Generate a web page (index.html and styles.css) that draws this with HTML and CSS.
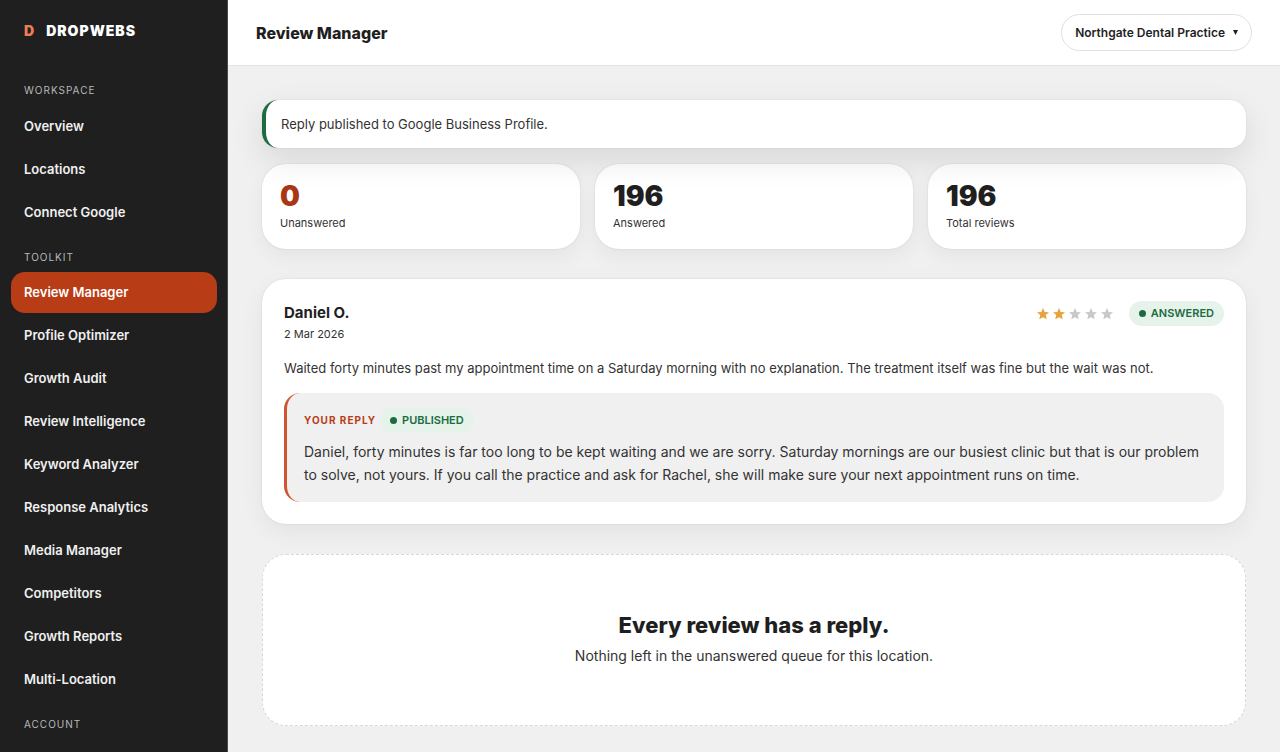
FILE: index.html
```html
<!DOCTYPE html>
<html lang="en">
  <head>
    <meta charset="utf-8">
    <meta name="viewport" content="width=device-width, initial-scale=1">
    <title>Review Manager</title>
    <link rel="stylesheet" href="styles.css">
  </head>
  <body>
    <aside class="sidebar">
      <a class="brand" href="#"><span class="brand-mark">D</span><span>DROPWEBS</span></a>
      <nav class="nav">
        <h2 class="nav-label">Workspace</h2>
        <a href="#">Overview</a>
        <a href="#">Locations</a>
        <a href="#">Connect Google</a>
        <h2 class="nav-label">Toolkit</h2>
        <a class="active" href="#" aria-current="page">Review Manager</a>
        <a href="#">Profile Optimizer</a>
        <a href="#">Growth Audit</a>
        <a href="#">Review Intelligence</a>
        <a href="#">Keyword Analyzer</a>
        <a href="#">Response Analytics</a>
        <a href="#">Media Manager</a>
        <a href="#">Competitors</a>
        <a href="#">Growth Reports</a>
        <a href="#">Multi-Location</a>
        <h2 class="nav-label">Account</h2>
      </nav>
    </aside>

    <div class="page">
      <header class="topbar">
        <h1>Review Manager</h1>
        <button class="location" type="button">Northgate Dental Practice
          <svg width="5" height="5" viewBox="0 0 5 5" aria-hidden="true"><path d="M0 0h5L2.500 5z" fill="currentColor"/></svg>
        </button>
      </header>

      <main class="content">
        <p class="alert" role="status">Reply published to Google Business Profile.</p>

        <section class="stats">
          <div class="stat"><strong class="warn">0</strong><span>Unanswered</span></div>
          <div class="stat"><strong>196</strong><span>Answered</span></div>
          <div class="stat"><strong>196</strong><span>Total reviews</span></div>
        </section>

        <article class="review">
          <div class="review-head">
            <div>
              <h2>Daniel O.</h2>
              <time datetime="2026-03-02">2 Mar 2026</time>
            </div>
            <div class="review-meta">
              <svg class="stars" width="78" height="14" viewBox="0 0 78 14" role="img" aria-label="2 out of 5 stars">
                <defs><path id="star" d="M7 1l1.700 3.900 4.300.4-3.200 2.800.9 4.200L7 10.200l-3.700 2.100.9-4.200L1 5.300l4.300-.4z"/></defs>
                <g fill="#e8a33d"><use href="#star"/><use href="#star" x="16"/></g>
                <g fill="#c9c9c9"><use href="#star" x="32"/><use href="#star" x="48"/><use href="#star" x="64"/></g>
              </svg>
              <span class="badge">Answered</span>
            </div>
          </div>
          <p class="review-text">Waited forty minutes past my appointment time on a Saturday morning with no explanation. The treatment itself was fine but the wait was not.</p>
          <div class="reply">
            <div class="reply-head"><h3>Your reply</h3><span class="badge">Published</span></div>
            <p>Daniel, forty minutes is far too long to be kept waiting and we are sorry. Saturday mornings are our busiest clinic but that is our problem to solve, not yours. If you call the practice and ask for Rachel, she will make sure your next appointment runs on time.</p>
          </div>
        </article>

        <section class="empty">
          <h2>Every review has a reply.</h2>
          <p>Nothing left in the unanswered queue for this location.</p>
        </section>
      </main>
    </div>
  </body>
</html>
```
FILE: styles.css
```css
* {
  box-sizing: border-box;
}

body {
  margin: 0;
  display: flex;
  height: 100vh;
  overflow: hidden;
  background: #f0f0f0;
  color: #333;
  font-family: Inter, "Open Sans", sans-serif;
  font-size: 13px;
  line-height: 20px;
}

h1, h2, h3, p {
  margin: 0;
}

h1, h2, strong {
  color: #1f1f1f;
}

/* sidebar */
.sidebar {
  flex: 0 0 228px;
  padding: 21px 10px 0 11px;
  overflow: hidden;
  background: #1f1f1f;
  border-right: 1px solid #4a4a4a;
}

.brand {
  display: flex;
  gap: 11px;
  padding-left: 13px;
  color: #fff;
  font-size: 14px;
  font-weight: 900;
  letter-spacing: 1px;
  text-decoration: none;
}

.brand-mark {
  color: #ef7d55;
}

.nav {
  display: flex;
  flex-direction: column;
  gap: 2px;
  padding-top: 37px;
}

.nav-label {
  padding: 4px 13px 0;
  color: #b8b8b8;
  font-size: 10px;
  font-weight: 400;
  line-height: 16px;
  letter-spacing: 1px;
  text-transform: uppercase;
}

.nav a + .nav-label {
  padding-top: 14px;
  margin-bottom: 5px;
}

.nav .nav-label:first-child {
  margin-bottom: 6px;
}

.nav a {
  padding: 10px 13px;
  border-radius: 14px;
  color: #f0f0f0;
  font-weight: 600;
  line-height: 21px;
  text-decoration: none;
}

.nav .active {
  background: #b83c16;
  color: #fff;
}

/* top bar */
.page {
  flex: 1;
  min-width: 0;
}

.topbar {
  display: flex;
  align-items: center;
  justify-content: space-between;
  padding: 14px 28px;
  background: #fff;
  border-bottom: 1px solid #e4e4e4;
}

.topbar h1 {
  font-size: 16px;
  font-weight: 800;
}

.location {
  display: flex;
  align-items: center;
  gap: 8px;
  padding: 7px 13px;
  border: 1px solid #e0e0e0;
  border-radius: 20px;
  background: #fff;
  color: #1f1f1f;
  font: 600 12px/21px Inter, sans-serif;
}

/* content */
.content {
  display: flex;
  flex-direction: column;
  gap: 30px;
  padding: 34px;
}

.alert {
  z-index: 1;
  margin-bottom: -14px;
  padding: 14px 15px;
  border-left: 4px solid #1d6b40;
  border-radius: 16px;
  background: #fff;
  box-shadow: 0 12px 32px rgba(0, 0, 0, 0.1), 0 0 2px rgba(0, 0, 0, 0.1);
}

.stats {
  display: grid;
  grid-template-columns: repeat(3, 1fr);
  gap: 15px;
}

.stat {
  display: flex;
  flex-direction: column;
  padding: 16px 18px;
  border-radius: 24px;
  background: #fff;
  box-shadow: 0 8px 20px rgba(0, 0, 0, 0.05), 0 0 2px rgba(0, 0, 0, 0.12);
  font-size: 11px;
}

.stat strong {
  font-size: 28px;
  font-weight: 900;
  line-height: 33px;
}

.stat .warn {
  color: #a83814;
}

.review {
  padding: 22px;
  border-radius: 24px;
  background: #fff;
  box-shadow: 0 8px 24px rgba(0, 0, 0, 0.06), 0 0 2px rgba(0, 0, 0, 0.12);
}

.review-head {
  display: flex;
  align-items: flex-start;
  justify-content: space-between;
}

.review-head h2 {
  font-size: 15px;
  font-weight: 700;
  line-height: 24px;
}

.review-head time {
  display: block;
  font-size: 11px;
  line-height: 18px;
}

.review-meta {
  display: flex;
  align-items: center;
  gap: 15px;
}

.badge {
  display: inline-flex;
  align-items: center;
  gap: 5px;
  padding: 2px 10px;
  border-radius: 13px;
  background: #e5f3eb;
  color: #1d6b40;
  font-size: 11px;
  font-weight: 600;
  line-height: 21px;
  text-transform: uppercase;
}

.badge::before {
  content: "";
  width: 7px;
  height: 7px;
  border-radius: 50%;
  background: #1d6b40;
}

.review-text {
  padding: 14px 0;
  line-height: 22px;
}

.reply {
  padding: 15px 17px 16px;
  border-left: 3px solid #cf5530;
  border-radius: 16px;
  background: #f0f0f0;
  font-size: 14px;
  line-height: 23px;
}

.reply-head {
  display: flex;
  align-items: center;
  gap: 4px;
  margin-bottom: 7px;
}

.reply-head h3 {
  color: #b83c16;
  font-size: 10px;
  font-weight: 700;
  letter-spacing: 1px;
  text-transform: uppercase;
}

.empty {
  padding: 55px 24px 56px;
  border: 1px dashed #d8d8d8;
  border-radius: 24px;
  background: #fff;
  text-align: center;
  font-size: 14px;
  line-height: 26px;
}

.empty h2 {
  margin-bottom: 3px;
  font-size: 22px;
  font-weight: 800;
  line-height: 30px;
}
```
